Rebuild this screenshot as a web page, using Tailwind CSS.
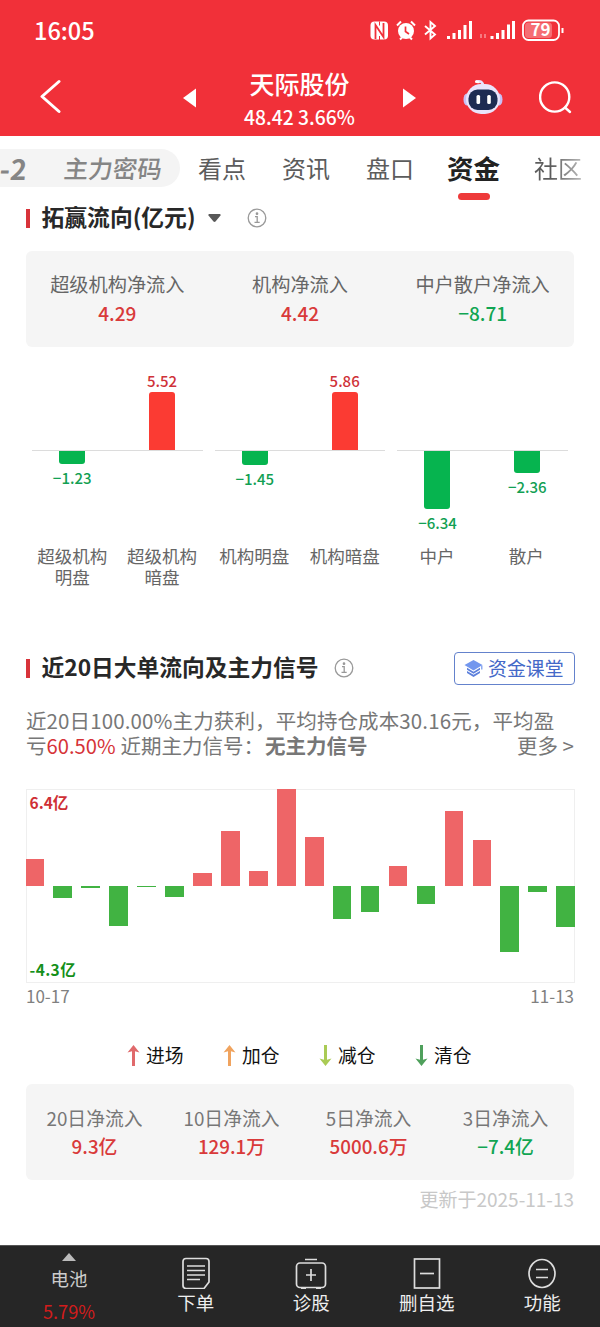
<!DOCTYPE html>
<html lang="zh-CN">
<head>
<meta charset="utf-8">
<title>天际股份 资金</title>
<script src="https://cdn.jsdelivr.net/npm/@tailwindcss/browser@4"></script>
</head>
<body class="w-[600px] h-[1327px] bg-white overflow-hidden font-['Noto_Sans_CJK_SC',sans-serif] text-[#666] flex flex-col whitespace-nowrap">

<header class="h-[136px] shrink-0 bg-[#f13039] text-white">
  <!-- status bar -->
  <div class="h-[60px] flex items-center justify-between pl-[34px] pr-[35px]">
    <span class="text-[23.500px] leading-[60px] font-medium">16:05</span>
    <svg class="w-[196px] h-[24px] mt-px" viewBox="0 0 196 24" fill="none" stroke="#fff">
      <rect x="1.500" y="2.500" width="17.500" height="18" rx="4" fill="#fff" stroke="none"/>
      <path d="M6.500 20V6l8 12V4" stroke="#f13039" stroke-width="1.800"/>
      <path d="M10.500 2.500v4M10.500 17v4" stroke="#f13039" stroke-width="1"/>
      <circle cx="37" cy="12" r="8" fill="#fff" stroke="none"/>
      <path d="M36.500 7.500v5l3.500 2.500" stroke="#f13039" stroke-width="1.700"/>
      <path d="M28 6.500l4-4M46 6.500l-4-4M31 20.500l2-2M43 20.500l-2-2" stroke-width="2"/>
      <path d="M56 7l10 8.500-4.500 4V3l4.500 4-10 8.500" stroke-width="1.900"/>
      <path d="M80 21v-3M85.500 21v-6M91 21v-9M96.500 21V7M102 21V3" stroke-width="3" transform="translate(-.5 -1)"/>
      <path d="M112 15v4M116 15v4" stroke-width="1.800" opacity=".4"/>
      <path d="M123 20v-3M128.500 20v-6M134 20v-9M139.500 20V5.500M144.500 20V2" stroke-width="3"/>
      <rect x="154" y="1.500" width="36" height="19.500" rx="5.500" stroke-width="1.800"/>
      <rect x="156" y="3.500" width="27" height="15.500" rx="3.500" fill="#fff" fill-opacity=".3" stroke="none"/>
      <path d="M193.500 9v5" stroke-width="2"/>
      <text x="171.500" y="17.200" text-anchor="middle" font-size="17" font-weight="700" fill="#fff" stroke="none">79</text>
    </svg>
  </div>
  <!-- stock title bar -->
  <div class="h-[76px] flex items-center">
    <svg class="w-[22px] h-[36px] ml-[39px] -mt-[4px]" viewBox="0 0 22 36" fill="none" stroke="#fff" stroke-width="3" stroke-linecap="round" stroke-linejoin="round"><path d="M20 3.500L3 18.500L20 33.500"/></svg>
    <svg class="w-[13px] h-[20px] ml-[122px] -mt-[1px]" viewBox="0 0 13 20" fill="#fff"><path d="M0 10L13 .5v19z"/></svg>
    <div class="w-[207px] flex flex-col items-center pt-[3px]">
      <div class="text-[25px] leading-[34px] font-medium">天际股份</div>
      <div class="text-[19.300px] leading-[34px] font-medium">48.42 3.66%</div>
    </div>
    <svg class="w-[13px] h-[20px] -mt-[1px]" viewBox="0 0 13 20" fill="#fff"><path d="M13 10L0 .5v19z"/></svg>
    <svg class="w-[40px] h-[38px] ml-[47px] -mt-[3px]" viewBox="0 0 40 38">
      <path d="M20 8C20 4 17.500 2.500 13.500 3.500" fill="none" stroke="#e9e2ff" stroke-width="2.500" stroke-linecap="round"/>
      <path d="M17 5c-2-4-5-3-5-1 0 1 2 1.500 5 1z" fill="#fff"/>
      <ellipse cx="3.800" cy="21.500" rx="3.300" ry="6" fill="#c9c0f6"/><ellipse cx="36.200" cy="21.500" rx="3.300" ry="6" fill="#c9c0f6"/>
      <rect x="3" y="6" width="34" height="30" rx="15" fill="#e9e4fb"/>
      <rect x="5.500" y="11.500" width="29" height="20.500" rx="9" fill="#1d2b52"/>
      <rect x="13.500" y="17" width="3.600" height="9" rx="1.500" fill="#fff"/><rect x="24.200" y="17" width="3.600" height="9" rx="1.500" fill="#fff"/>
    </svg>
    <svg class="w-[34px] h-[34px] ml-[36px] -mt-px" viewBox="0 0 34 34" fill="none" stroke="#fff" stroke-width="2.400" stroke-linecap="round"><circle cx="15.700" cy="16" r="14.600"/><path d="M26 26.500l5 4.500"/></svg>
  </div>
</header>

<!-- tabs -->
<nav class="h-[65px] shrink-0 flex items-start text-[24px] leading-[38px] text-[#5c5c5c] pt-[13px] overflow-hidden">
  <div class="w-[180px] h-[38px] rounded-r-full bg-[#f4f4f4] flex items-center text-[24.500px] font-medium text-[#858585] shrink-0">
    <span class="w-[27px] flex justify-end font-bold text-[28px] -skew-x-6">-2</span>
    <span class="ml-[37px] -skew-x-6">主力密码</span>
  </div>
  <span class="ml-[18px]">看点</span>
  <span class="ml-[36px]">资讯</span>
  <span class="ml-[36px]">盘口</span>
  <div class="ml-[33px] flex flex-col items-center text-[#222]">
    <span class="text-[26.500px] font-bold">资金</span>
    <i class="w-[32px] h-[7px] rounded-full bg-[#ee3a3a] mt-[6px]"></i>
  </div>
  <span class="ml-[34px] bg-linear-to-r from-[#5c5c5c] from-35% to-[#bbb] bg-clip-text text-transparent">社区</span>
</nav>

<main class="px-[26px] flex-1 flex flex-col">
  <!-- section title -->
  <div class="flex items-center h-[34px]">
    <i class="w-[3.500px] h-[19px] bg-[#d8333a]"></i>
    <h2 class="ml-[12px] -mt-[2px] w-[154px] text-[22.800px] leading-[34px] font-bold text-[#282828]">拓赢流向(亿元)</h2>
    <svg class="w-[13px] h-[8px] ml-[12px]" viewBox="0 0 13 8" fill="#585858"><path d="M1 0h11q1 .5.500 1.500L7.500 7.500q-1 .8-2 0L.5 1.500Q0 .5 1 0z"/></svg>
    <svg class="w-[20px] h-[20px] ml-[26px]" viewBox="0 0 20 20" fill="none" stroke="#999" stroke-width="1.300"><circle cx="10" cy="10" r="8.800"/><path d="M8 8.700h2.200v5.500M7.500 14.300h5.200"/><circle cx="10" cy="5.700" r=".7" fill="#999"/></svg>
  </div>

  <div class="mt-[16px] h-[96px] rounded-[6px] bg-[#f5f5f5] grid grid-cols-3 pt-[19px] text-center">
    <div><div class="text-[19.200px] leading-[28px]">超级机构净流入</div><div class="text-[19px] leading-[30px] font-medium text-[#d93a3a]">4.29</div></div>
    <div><div class="text-[19.200px] leading-[28px]">机构净流入</div><div class="text-[19px] leading-[30px] font-medium text-[#d93a3a]">4.42</div></div>
    <div><div class="text-[19.200px] leading-[28px]">中户散户净流入</div><div class="text-[19px] leading-[30px] font-medium text-[#10a552]">−8.71</div></div>
  </div>

  <!-- flow bars -->
  <div class="grid grid-cols-3 text-[15px] leading-[20px] font-medium text-center">
    <div class="mx-[1px]">
      <div class="grid grid-cols-2 h-[103px] items-end text-[#cf3238]">
        <div></div>
        <div class="flex flex-col items-center pr-px"><span class="mb-px">5.52</span><i class="w-[26px] rounded-t-[3px] bg-[#fb3b33]" style="height:58px"></i></div>
      </div>
      <div class="h-px bg-[#dcdcdc] mx-[5px]"></div>
      <div class="grid grid-cols-2 h-[94px] items-start text-[#12a053]">
        <div class="flex flex-col items-center gap-[4px]"><i class="w-[26px] rounded-b-[3px] bg-[#06b44f]" style="height:13px"></i>−1.23</div>
      </div>
      <div class="grid grid-cols-2 h-[43px] text-[17.500px] leading-[21px] font-normal"><div>超级机构<br>明盘</div><div class="pr-px">超级机构<br>暗盘</div></div>
    </div>
    <div class="mx-[1px]">
      <div class="grid grid-cols-2 h-[103px] items-end text-[#cf3238]">
        <div></div>
        <div class="flex flex-col items-center pr-px"><span class="mb-px">5.86</span><i class="w-[26px] rounded-t-[3px] bg-[#fb3b33]" style="height:58px"></i></div>
      </div>
      <div class="h-px bg-[#dcdcdc] mx-[5px]"></div>
      <div class="grid grid-cols-2 h-[94px] items-start text-[#12a053]">
        <div class="flex flex-col items-center gap-[4px]"><i class="w-[26px] rounded-b-[3px] bg-[#06b44f]" style="height:14px"></i>−1.45</div>
      </div>
      <div class="grid grid-cols-2 h-[43px] text-[17.500px] leading-[21px] font-normal"><div class="pr-px">机构明盘</div><div class="pr-px">机构暗盘</div></div>
    </div>
    <div class="mx-[1px]">
      <div class="h-[103px]"></div>
      <div class="h-px bg-[#dcdcdc] mx-[5px]"></div>
      <div class="grid grid-cols-2 h-[94px] items-start text-[#12a053]">
        <div class="flex flex-col items-center gap-[4px]"><i class="w-[26px] rounded-b-[3px] bg-[#06b44f]" style="height:58px"></i>−6.34</div>
        <div class="flex flex-col items-center gap-[4px] pr-px"><i class="w-[26px] rounded-b-[3px] bg-[#06b44f]" style="height:22px"></i>−2.36</div>
      </div>
      <div class="grid grid-cols-2 h-[43px] text-[17.500px] leading-[21px] font-normal"><div class="pr-px">中户</div><div class="pr-[3px]">散户</div></div>
    </div>
  </div>

  <!-- 20 day section -->
  <div class="mt-[63px] flex items-center h-[34px]">
    <i class="w-[3.500px] h-[19px] bg-[#d8333a]"></i>
    <h2 class="ml-[12px] -mt-[2px] w-[277px] text-[22.750px] leading-[34px] font-bold text-[#282828]">近20日大单流向及主力信号</h2>
    <svg class="w-[20px] h-[20px] ml-[15px]" viewBox="0 0 20 20" fill="none" stroke="#999" stroke-width="1.300"><circle cx="10" cy="10" r="8.800"/><path d="M8 8.700h2.200v5.500M7.500 14.300h5.200"/><circle cx="10" cy="5.700" r=".7" fill="#999"/></svg>
    <div class="ml-auto w-[121px] h-[33px] -mr-px border border-[#6482cc] rounded-[4px] flex items-center text-[18.900px] text-[#4468c8] pl-[9px]">
      <svg class="w-[19px] h-[17px] mr-[5px]" viewBox="0 0 19 17"><path d="M9.500 0L18.500 5 9.500 10.500.5 5z" fill="#7397ee"/><path d="M3 7.800l6.500 3.900L16 7.800v1.900l-6.500 4L3 9.700z" fill="#5c80dc"/><path d="M3 10.900l6.500 3.900 6.500-3.900v2.200L9.500 17 3 13.100z" fill="#5c80dc"/><path d="M17.800 5.500v4" stroke="#7397ee" stroke-width="1.200"/></svg>
      <span class="leading-[28px]">资金课堂</span>
    </div>
  </div>

  <div class="mt-[23px] text-[20.500px] leading-[25px] text-[#777]">
    <div class="tracking-[0.120px]">近20日100.00%主力获利，平均持仓成本30.16元，平均盈</div>
    <div class="flex"><span>亏</span><span class="text-[20.200px] text-[#d63338]">60.50%</span><span class="ml-[5px]">近期主力信号：</span><span class="font-bold ml-px">无主力信号</span><span class="ml-auto">更多 &gt;</span></div>
  </div>

  <!-- daily net flow chart -->
  <div class="relative mt-[31px] h-[194px] -mr-px -ml-[0.500px] border border-[#efefef]">
    <div class="-mx-px h-full flex gap-[9.300px] items-start">
      <i class="flex-1 bg-[#ee6567]" style="margin-top:68.500px;height:27.500px"></i>
      <i class="flex-1 bg-[#41b342]" style="margin-top:96px;height:11.500px"></i>
      <i class="flex-1 bg-[#41b342]" style="margin-top:96px;height:2px"></i>
      <i class="flex-1 bg-[#41b342]" style="margin-top:96px;height:39.500px"></i>
      <i class="flex-1 bg-[#41b342]" style="margin-top:96px;height:1px"></i>
      <i class="flex-1 bg-[#41b342]" style="margin-top:96px;height:11px"></i>
      <i class="flex-1 bg-[#ee6567]" style="margin-top:82.500px;height:13.500px"></i>
      <i class="flex-1 bg-[#ee6567]" style="margin-top:40.500px;height:55.500px"></i>
      <i class="flex-1 bg-[#ee6567]" style="margin-top:81px;height:15px"></i>
      <i class="flex-1 bg-[#ee6567]" style="margin-top:-1px;height:97px"></i>
      <i class="flex-1 bg-[#ee6567]" style="margin-top:46.500px;height:49.500px"></i>
      <i class="flex-1 bg-[#41b342]" style="margin-top:96px;height:32.500px"></i>
      <i class="flex-1 bg-[#41b342]" style="margin-top:96px;height:25.500px"></i>
      <i class="flex-1 bg-[#ee6567]" style="margin-top:76px;height:20px"></i>
      <i class="flex-1 bg-[#41b342]" style="margin-top:96px;height:18px"></i>
      <i class="flex-1 bg-[#ee6567]" style="margin-top:21px;height:75px"></i>
      <i class="flex-1 bg-[#ee6567]" style="margin-top:50px;height:46px"></i>
      <i class="flex-1 bg-[#41b342]" style="margin-top:96px;height:66px"></i>
      <i class="flex-1 bg-[#41b342]" style="margin-top:96px;height:6px"></i>
      <i class="flex-1 bg-[#41b342]" style="margin-top:96px;height:41px"></i>
    </div>
    <span class="absolute left-[3px] top-[2px] text-[15.500px] leading-[20px] font-bold text-[#cf2f35]">6.4亿</span>
    <span class="absolute left-[3px] bottom-[3px] text-[15.500px] tracking-[0.400px] leading-[20px] font-bold text-[#14901a]">-4.3亿</span>
  </div>
  <div class="flex justify-between text-[17px] leading-[26px] h-[24px] text-[#808080]"><span>10-17</span><span>11-13</span></div>

  <!-- legend -->
  <div class="mt-[34px] flex pl-[101px] text-[18.800px] leading-[28px] text-[#111]">
    <div class="w-[96px] flex items-center gap-[6px]"><svg class="w-[13px] h-[21px]" viewBox="0 0 13 21" fill="#e0696b"><path d="M6.500 0L12.500 7.500 8 6.200V21H5V6.200L.5 7.500z"/></svg>进场</div>
    <div class="w-[96px] flex items-center gap-[6px]"><svg class="w-[13px] h-[21px]" viewBox="0 0 13 21" fill="#f0a35e"><path d="M6.500 0L12.500 7.500 8 6.200V21H5V6.200L.5 7.500z"/></svg>加仓</div>
    <div class="w-[96px] flex items-center gap-[6px]"><svg class="w-[13px] h-[21px]" viewBox="0 0 13 21" fill="#aacb55"><path d="M6.500 21L12.500 13.500 8 14.800V0H5V14.800L.5 13.500z"/></svg>减仓</div>
    <div class="w-[96px] flex items-center gap-[6px]"><svg class="w-[13px] h-[21px]" viewBox="0 0 13 21" fill="#4fa05c"><path d="M6.500 21L12.500 13.500 8 14.800V0H5V14.800L.5 13.500z"/></svg>清仓</div>
  </div>

  <div class="mt-[15px] h-[96px] rounded-[6px] bg-[#f5f5f5] grid grid-cols-4 pt-[20px] text-center text-[18.800px] leading-[28px] text-[#777]">
    <div>20日净流入<div class="font-medium text-[#d93a3a]">9.3亿</div></div>
    <div>10日净流入<div class="font-medium text-[#d93a3a]">129.1万</div></div>
    <div>5日净流入<div class="font-medium text-[#d93a3a]">5000.6万</div></div>
    <div>3日净流入<div class="font-medium text-[#10a552]">−7.4亿</div></div>
  </div>
  <div class="mt-[5px] text-right text-[19px] leading-[28px] text-[#c8c8c8]">更新于2025-11-13</div>
</main>

<!-- bottom bar -->
<footer class="h-[82px] shrink-0 bg-[#262626] border-t border-[#555] flex text-[18.500px] leading-[26px] text-[#eee] text-center">
  <div class="w-[138px] flex flex-col items-center pt-[7px] text-[#ccc]">
    <svg class="w-[14px] h-[8px]" viewBox="0 0 14 8" fill="#bbb"><path d="M7 0l7 8H0z"/></svg>
    <span class="mt-[4px]">电池</span>
    <span class="mt-[7px] text-[18.200px] text-[#d21c1c]">5.79%</span>
  </div>
  <div class="flex-1 flex flex-col items-center pt-[11px]">
    <svg class="w-[32px] h-[32px]" viewBox="0 0 32 32" fill="none" stroke="#ddd" stroke-width="1.700"><path d="M6 1.500h20q3 0 3 3V25l-5 6.500H6q-3 0-3-3v-24q0-3 3-3z"/><path d="M7 9h18M7 13.500h18M7 18h18M7 22.500h13"/></svg>
    <span class="leading-[26px]">下单</span>
  </div>
  <div class="flex-1 flex flex-col items-center pt-[11px]">
    <svg class="w-[32px] h-[32px]" viewBox="0 0 32 32" fill="none" stroke="#ddd" stroke-width="1.700"><rect x="1.500" y="6" width="29" height="24.500" rx="3.500"/><path d="M10 2.500h12M16 12v12M11 18h10"/><path d="M6 31.200h5M21 31.200h5" stroke-width="1.500"/></svg>
    <span class="leading-[26px]">诊股</span>
  </div>
  <div class="flex-1 flex flex-col items-center pt-[11px]">
    <svg class="w-[32px] h-[32px]" viewBox="0 0 32 32" fill="none" stroke="#ddd" stroke-width="1.700"><rect x="3.500" y="2" width="25" height="29"/><path d="M9 16.500h14"/></svg>
    <span class="leading-[26px]">删自选</span>
  </div>
  <div class="flex-1 flex flex-col items-center pt-[11px]">
    <svg class="w-[32px] h-[32px]" viewBox="0 0 32 32" fill="none" stroke="#ddd" stroke-width="1.700"><ellipse cx="16" cy="16.500" rx="13" ry="14"/><path d="M10 12.500h12M10 20.500h12"/></svg>
    <span class="leading-[26px]">功能</span>
  </div>
</footer>
</body>
</html>
